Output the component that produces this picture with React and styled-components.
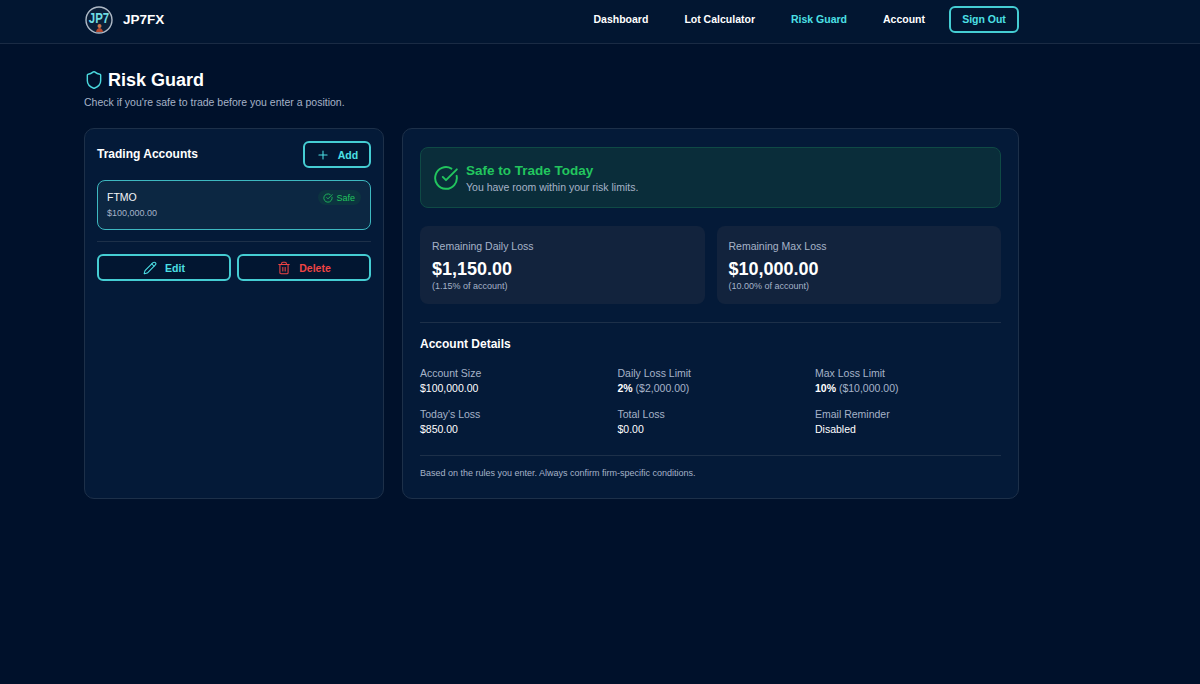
import React from "react";
import styled, { createGlobalStyle } from "styled-components";
import { Shield, Plus, Pencil, Trash2, CircleCheckBig } from "lucide-react";

const Global = createGlobalStyle`
  html, body { margin: 0; padding: 0; background: #00112b; }
  body { font-family: "Liberation Sans", Arial, sans-serif; color: #fff; min-height: 684px; }
`;

const Page = styled.div`min-height: 684px; background: #00112b; overflow: hidden;`;
const Header = styled.header`
  height: 43px;
  background: #021631;
  border-bottom: 1px solid #1a2b44;
  box-sizing: content-box;
`;
const HeaderInner = styled.div`
  width: 935px; margin-left: 84px; height: 100%;
  display: flex; align-items: center; justify-content: space-between;
`;
const Brand = styled.div`display: flex; align-items: center; gap: 10px; padding-left: 1px; margin-top: -4px;`;
const BrandName = styled.span`font-size: 13.5px; font-weight: 700;`;
const Nav = styled.nav`display: flex; align-items: center; margin-top: -5px;`;
const NavLink = styled.a`
  font-size: 10.5px; font-weight: 700; margin-right: ${p => p.$mr}px;
  color: ${p => (p.$active ? "#4ce0e6" : "#fff")};
`;
const SignOut = styled.button`
  width: 70px; height: 27px; border: 2px solid #45cdd3; border-radius: 6px; background: transparent;
  color: #4ce0e6; font: 700 10.5px "Liberation Sans", Arial, sans-serif; padding: 0;
`;
const Main = styled.main`width: 936px; margin-left: 84px; padding-top: 25px;`;
const TitleRow = styled.div`display: flex; align-items: center; gap: 4px; height: 22px;`;
const Title = styled.h1`margin: 0; font-size: 18px; line-height: 22px; font-weight: 700;`;
const Sub = styled.p`margin: 4px 0 0; font-size: 10.5px; line-height: 14px; color: #a6b3c8;`;
const Columns = styled.div`display: grid; grid-template-columns: 300px 617px; gap: 18px; margin-top: 19px;`;
const Card = styled.section`
  height: 371px; box-sizing: border-box; background: #041a38;
  border: 1px solid #1d3049; border-radius: 10px;
  padding: ${p => p.$pad};
`;
const ListHead = styled.div`display: flex; align-items: center; justify-content: space-between; height: 27px;`;
const ListTitle = styled.h2`margin: 0 0 2px; font-size: 12px; font-weight: 700;`;
const OutlineButton = styled.button`
  height: 27px; width: ${p => p.$w || "100%"}; box-sizing: border-box;
  border: 2px solid #45cdd3; border-radius: 6px; background: #021631;
  display: flex; align-items: center; justify-content: center; gap: 8px;
  font: 700 10.5px "Liberation Sans", Arial, sans-serif; padding: 0;
  color: ${p => p.$color || "#4ce0e6"};
`;
const Account = styled.div`
  margin-top: 12px; height: 50px; box-sizing: border-box;
  border: 1px solid #3eb8c0; border-radius: 8px; background: #0c2742;
  padding: 0 9px; display: flex; justify-content: space-between;
`;
const AccountText = styled.div`display: flex; flex-direction: column; padding-top: 10px;`;
const AccountName = styled.span`font-size: 10.5px; line-height: 13px; color: #f2f5f8;`;
const AccountSize = styled.span`font-size: 9px; line-height: 11px; margin-top: 4px; color: #a6b3c8;`;
const Badge = styled.span`
  margin-top: 9px; height: 15px; padding: 0 6px 0 5px; border-radius: 8px; background: #0c3440;
  display: flex; align-items: center; gap: 3px; font-size: 9px; color: #22c55e;
`;
const Rule = styled.hr`
  border: 0; height: 1px; background: #1d3049; margin: ${p => p.$m};
`;
const Actions = styled.div`display: grid; grid-template-columns: 1fr 1fr; gap: 6px;`;
const Banner = styled.div`
  height: 61px; box-sizing: border-box; border: 1px solid #0f4a45; border-radius: 8px; background: #0a2d3a;
  display: flex; align-items: center; gap: 7px; padding-left: 12px;
`;
const BannerText = styled.div`display: flex; flex-direction: column;`;
const BannerTitle = styled.strong`font-size: 13.5px; line-height: 17px; color: #22c55e;`;
const BannerSub = styled.span`font-size: 10.5px; line-height: 14px; margin-top: 1px; color: #a6b3c8;`;
const Stats = styled.div`display: grid; grid-template-columns: 1fr 1fr; gap: 12px; margin-top: 18px;`;
const Stat = styled.div`
  height: 78px; box-sizing: border-box; border-radius: 8px; background: #12233d; padding: 13px 12px 0;
  display: flex; flex-direction: column;
`;
const StatLabel = styled.span`font-size: 10.5px; line-height: 14px; color: #a6b3c8;`;
const StatValue = styled.strong`font-size: 18px; line-height: 21px; margin-top: 6px;`;
const StatNote = styled.span`font-size: 9px; line-height: 11px; margin-top: 1px; color: #a6b3c8;`;
const DetailsTitle = styled.h3`margin: 0; font-size: 12px; line-height: 14px; font-weight: 700;`;
const DetailGrid = styled.div`
  display: grid; grid-template-columns: 197.5px 197.5px 1fr; row-gap: 11px; margin-top: 15px;
`;
const Detail = styled.div`display: flex; flex-direction: column;`;
const DetailLabel = styled.span`font-size: 10.5px; line-height: 14px; color: #a6b3c8;`;
const DetailValue = styled.span`font-size: 10.5px; line-height: 15px; margin-top: 1px; color: #fff;`;
const Muted = styled.span`color: #a6b3c8;`;
const Note = styled.p`margin: 0; font-size: 9px; line-height: 11px; color: #a6b3c8;`;

const Logo = () => (
  <svg width="28" height="28" viewBox="0 0 28 28">
    <circle cx="14" cy="14" r="13" fill="#0b1f38" stroke="#aeb9c6" strokeWidth="1.4" />
    <text x="14" y="15.5" textAnchor="middle" fontFamily="Liberation Sans" fontWeight="700" fontSize="11.5" fill="#6fdde3" transform="translate(0 -3.5) scale(1 1.3)">JP7</text>
    <circle cx="14.5" cy="20" r="2" fill="#c9764c" />
    <path d="M11 26c.5-3 2-4 3.5-4s3 1 3.5 4z" fill="#b5482e" />
  </svg>
);

const details = [
  ["Account Size", "$100,000.00"],
  ["Daily Loss Limit", <><b>2%</b> <Muted>($2,000.00)</Muted></>],
  ["Max Loss Limit", <><b>10%</b> <Muted>($10,000.00)</Muted></>],
  ["Today's Loss", "$850.00"],
  ["Total Loss", "$0.00"],
  ["Email Reminder", "Disabled"],
];

export default function App() {
  return (
    <Page>
      <Global />
      <Header>
        <HeaderInner>
          <Brand><Logo /><BrandName>JP7FX</BrandName></Brand>
          <Nav>
            <NavLink $mr={36}>Dashboard</NavLink>
            <NavLink $mr={36}>Lot Calculator</NavLink>
            <NavLink $mr={36} $active>Risk Guard</NavLink>
            <NavLink $mr={24}>Account</NavLink>
            <SignOut>Sign Out</SignOut>
          </Nav>
        </HeaderInner>
      </Header>
      <Main>
        <TitleRow>
          <Shield size={20} color="#4ad9de" strokeWidth={1.7} />
          <Title>Risk Guard</Title>
        </TitleRow>
        <Sub>Check if you're safe to trade before you enter a position.</Sub>
        <Columns>
          <Card $pad="12px">
            <ListHead>
              <ListTitle>Trading Accounts</ListTitle>
              <OutlineButton $w="68px"><Plus size={14} strokeWidth={1.8} />Add</OutlineButton>
            </ListHead>
            <Account>
              <AccountText>
                <AccountName>FTMO</AccountName>
                <AccountSize>$100,000.00</AccountSize>
              </AccountText>
              <Badge><CircleCheckBig size={10} strokeWidth={2} />Safe</Badge>
            </Account>
            <Rule $m="11px 0 12px" />
            <Actions>
              <OutlineButton><Pencil size={14} strokeWidth={1.8} />Edit</OutlineButton>
              <OutlineButton $color="#ef4444"><Trash2 size={14} strokeWidth={1.8} />Delete</OutlineButton>
            </Actions>
          </Card>
          <Card $pad="18px 17px">
            <Banner>
              <CircleCheckBig size={26} color="#22c55e" strokeWidth={1.8} />
              <BannerText>
                <BannerTitle>Safe to Trade Today</BannerTitle>
                <BannerSub>You have room within your risk limits.</BannerSub>
              </BannerText>
            </Banner>
            <Stats>
              <Stat>
                <StatLabel>Remaining Daily Loss</StatLabel>
                <StatValue>$1,150.00</StatValue>
                <StatNote>(1.15% of account)</StatNote>
              </Stat>
              <Stat>
                <StatLabel>Remaining Max Loss</StatLabel>
                <StatValue>$10,000.00</StatValue>
                <StatNote>(10.00% of account)</StatNote>
              </Stat>
            </Stats>
            <Rule $m="18px 0 14px" />
            <DetailsTitle>Account Details</DetailsTitle>
            <DetailGrid>
              {details.map(([label, value]) => (
                <Detail key={label}>
                  <DetailLabel>{label}</DetailLabel>
                  <DetailValue>{value}</DetailValue>
                </Detail>
              ))}
            </DetailGrid>
            <Rule $m="18px 0 12px" />
            <Note>Based on the rules you enter. Always confirm firm-specific conditions.</Note>
          </Card>
        </Columns>
      </Main>
    </Page>
  );
}
